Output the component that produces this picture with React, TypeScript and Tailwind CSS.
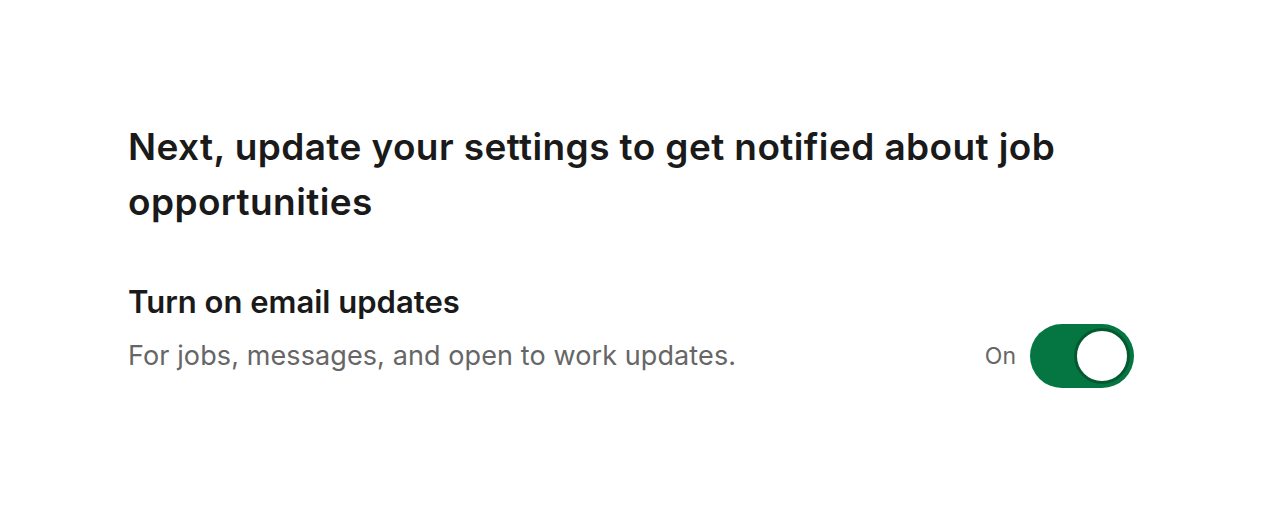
import React, { useState } from 'react';

export default function App() {
  const [on, setOn] = useState(true);

  return (
    <div className="min-h-screen bg-white font-['Inter','Noto_Sans',sans-serif] text-[#1a1a1a]">
      <div className="mx-auto w-[1006px] pt-[119px]">
        <h1 className="text-[37px] font-semibold leading-[55px] tracking-[0.4px]">
          Next, update your settings to get notified about job opportunities
        </h1>

        <div className="mt-[53px]">
          <h2 className="text-[31px] font-semibold leading-[40px]">Turn on email updates</h2>
          <div className="mt-[2px] flex items-center justify-between">
            <p className="text-[27px] leading-[36px] tracking-[0.1px] text-[#666666]">
              For jobs, messages, and open to work updates.
            </p>
            <div className="flex items-center gap-[14px]">
              <span className="text-[23px] text-[#666666]">{on ? 'On' : 'Off'}</span>
              <button
                onClick={() => setOn(!on)}
                className={`flex h-[64px] w-[104px] items-center rounded-full px-[4px] ${
                  on ? 'justify-end bg-[#057642]' : 'justify-start bg-[#666666]'
                }`}
              >
                <span className="block h-[56px] w-[56px] rounded-full border-[3px] border-[#05592f] bg-white" />
              </button>
            </div>
          </div>
        </div>
      </div>
    </div>
  );
}
